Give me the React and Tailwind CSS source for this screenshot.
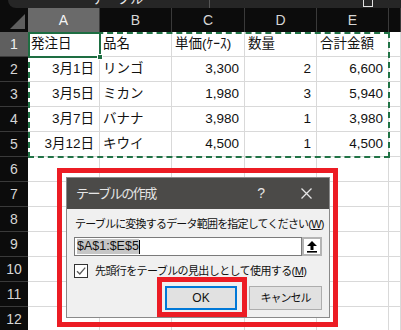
import React from 'react';

// widths of the sheet columns, header column first
const cols = [
  { key: 'A', w: 'w-[72px]' },
  { key: 'B', w: 'w-[72px]' },
  { key: 'C', w: 'w-[73px]' },
  { key: 'D', w: 'w-[72px]' },
  { key: 'E', w: 'w-[72px]' },
  { key: 'F', w: 'flex-1' },
];

const rows = [
  ['発注日', '品名', '単価(ｹｰｽ)', '数量', '合計金額'],
  ['3月1日', 'リンゴ', '3,300', '2', '6,600'],
  ['3月5日', 'ミカン', '1,980', '3', '5,940'],
  ['3月7日', 'バナナ', '3,980', '1', '3,980'],
  ['3月12日', 'キウイ', '4,500', '1', '4,500'],
];

const rightCols = [0, 2, 3, 4];

const RefEditIcon = () => (
  <svg width="12" height="13" viewBox="0 0 12 13">
    <path d="M6 1 L11 6 L7.5 6 L7.5 10 L4.5 10 L4.5 6 L1 6 Z" fill="#000" />
    <rect x="1" y="11" width="10" height="1.6" fill="#000" />
  </svg>
);

const CheckIcon = () => (
  <svg width="12" height="12" viewBox="0 0 12 12">
    <path d="M2 6.2 L4.8 9 L10.2 2.6" fill="none" stroke="#5a5a5a" strokeWidth="1.3" />
  </svg>
);

const CornerIcon = () => (
  <svg width="28" height="24" viewBox="0 0 28 24">
    <path d="M25 6 L25 21 L10 21 Z" fill="#5e5e5e" />
  </svg>
);

const SheetRow = ({ num, data }) => (
  <div className="flex h-[25px]">
    <div
      className={`w-[28px] shrink-0 flex items-center justify-center border-b border-[#3a3a3a] text-[14px] ${
        num === 1 ? 'bg-[#5f5f5f] text-[#f0f0f0]' : 'bg-[#0c0c0c] text-[#d6d6d6]'
      }`}
    >
      {num}
    </div>
    {cols.map((c, i) => {
      const value = data ? data[i] : '';
      const right = num !== 1 && rightCols.includes(i);
      return (
        <div
          key={c.key}
          className={`${c.w} shrink-0 flex items-center border-r border-b border-[#d9d9d9] text-[13.5px] text-[#111] whitespace-nowrap ${
            right ? 'justify-end pr-[5px]' : 'justify-start pl-[3px]'
          }`}
        >
          {value}
        </div>
      );
    })}
  </div>
);

export default function App() {
  return (
    <div className="relative w-[401px] h-[330px] overflow-hidden bg-white font-['Liberation_Sans','Noto_Sans_CJK_JP',sans-serif]">
      {/* ribbon edge */}
      <div className="h-[8px] bg-[#0c0c0c]">
        <div className="ml-[8px] h-full rounded-bl-[8px] bg-[#262626] flex overflow-hidden">
          <div className="w-[202px] border-r border-[#555] overflow-hidden">
            <div className="pl-[84px] text-[13px] text-[#e8e8e8] leading-[13px] -translate-y-[8px]">テーブル</div>
          </div>
          <div className="flex-1 flex justify-end pr-[28px]">
            <div className="w-[10px] h-[10px] border border-[#e0e0e0] -translate-y-[3px]" />
          </div>
        </div>
      </div>

      {/* column headers */}
      <div className="flex h-[24px] bg-[#0c0c0c]">
        <div className="w-[28px] shrink-0">
          <CornerIcon />
        </div>
        {cols.map((c) => (
          <div
            key={c.key}
            className={`${c.w} shrink-0 flex items-center justify-center border-r border-[#3a3a3a] text-[14px] ${
              c.key === 'A' ? 'bg-[#6a6a6a] text-[#f4f4f4]' : 'text-[#d6d6d6]'
            }`}
          >
            {c.key === 'F' ? '' : c.key}
          </div>
        ))}
      </div>

      {/* grid */}
      {Array.from({ length: 12 }, (_, i) => (
        <SheetRow key={i} num={i + 1} data={rows[i]} />
      ))}

      {/* copy range marquee */}
      <div className="absolute left-[28px] top-[32px] w-[362px] h-[126px] border-2 border-dashed border-[#217346]" />
      {/* active cell */}
      <div className="absolute left-[28px] top-[32px] w-[73px] h-[26px] border-2 border-[#1e6e42]" />
      <div className="absolute left-[97px] top-[54px] w-[6px] h-[6px] bg-[#1e6e42] border border-white" />

      {/* highlight around dialog */}
      <div className="absolute left-[57px] top-[168px] w-[281px] h-[159px] border-[5px] border-[#ec1c24] pt-[4px] pl-[4px] pr-[3px] pb-[4px]">
        <div className="h-full border border-[#8a8a8a] bg-[#f0f0f0] flex flex-col font-['Liberation_Sans','Noto_Sans_CJK_JP',sans-serif]">
          <div className="h-[31px] shrink-0 bg-[#4b4a48] flex items-center pl-[9px] pr-[17px] text-[#e6e6e6]">
            <span className="text-[13px] tracking-[-1.5px]">テーブルの作成</span>
            <span className="ml-auto text-[14px]">?</span>
            <svg className="ml-[36px]" width="11" height="11" viewBox="0 0 11 11">
              <path d="M0.5 0.5 L10.5 10.5 M10.5 0.5 L0.5 10.5" stroke="#e6e6e6" strokeWidth="1.3" />
            </svg>
          </div>
          <div className="px-[7px] pt-[8px] text-[#111]">
            <div className="h-[14px] leading-[14px] text-[11px] tracking-[-0.8px] pl-[1px] whitespace-nowrap">
              テーブルに変換するデータ範囲を指定してください(<span className="underline">W</span>)
            </div>
            <div className="mt-[6px] flex h-[19px]">
              <div className="flex-1 border border-[#7a7a7a] bg-white flex items-center pl-[2px]">
                <span className="bg-[#c6c6c6] text-[12.5px] leading-[15px]">$A$1:$E$5</span>
                <span className="w-[1px] h-[14px] bg-black" />
              </div>
              <div className="w-[20px] border-2 border-[#b4b4b4] bg-white flex items-center justify-center">
                <RefEditIcon />
              </div>
            </div>
            <div className="mt-[8px] flex items-center h-[14px]">
              <div className="w-[14px] h-[14px] border border-[#333] bg-white flex items-center justify-center">
                <CheckIcon />
              </div>
              <span className="ml-[7px] text-[11px] tracking-[-0.6px] whitespace-nowrap">
                先頭行をテーブルの見出しとして使用する(<span className="underline">M</span>)
              </span>
            </div>
            <div className="mt-[8px] flex justify-end gap-[12px]">
              <div className="w-[72px] h-[24px] border-2 border-[#0078d7] bg-[#e1e1e1] flex items-center justify-center text-[12px]">
                OK
              </div>
              <div className="w-[73px] h-[24px] border border-[#adadad] bg-[#e1e1e1] flex items-center justify-center text-[11px] tracking-[-1px]">
                キャンセル
              </div>
            </div>
          </div>
        </div>
      </div>

      {/* highlight around OK */}
      <div className="absolute left-[157px] top-[277px] w-[90px] h-[40px] border-[5px] border-[#ec1c24]" />
    </div>
  );
}
